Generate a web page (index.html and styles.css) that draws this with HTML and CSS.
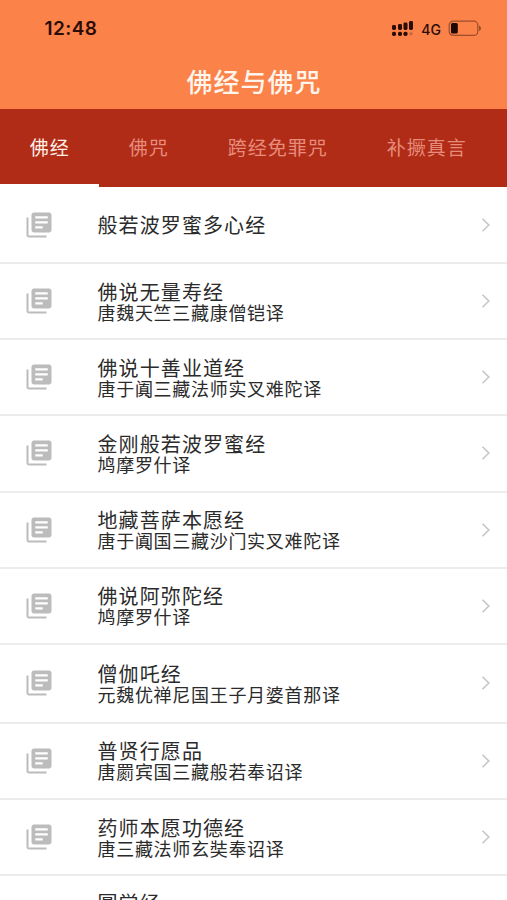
FILE: index.html
```html
<!DOCTYPE html>
<html lang="zh-CN">
<head>
<meta charset="utf-8">
<title>佛经与佛咒</title>
<link rel="stylesheet" href="styles.css">
</head>
<body>
<svg class="defs" width="0" height="0">
  <symbol id="book" viewBox="0 0 24 24"><path d="M3.600 6H2v14c0 1.100.9 2 2 2h14v-1.600H3.600V6zM20 2H8c-1.100 0-2 .9-2 2v12c0 1.100.9 2 2 2h12c1.100 0 2-.9 2-2V4c0-1.100-.9-2-2-2zm-1 8.700H9V9h10v1.700zm-4 4H9V13h6v1.700zm4-8H9V5h10v1.700z"/></symbol>
  <symbol id="chevron" viewBox="0 0 10 16"><path d="M1.500 1.800L7.800 8l-6.300 6.200" fill="none" stroke="#c6c6c8" stroke-width="1.600"/></symbol>
</svg>
<div class="screen">
  <header class="header">
    <div class="status">
      <span class="time">12:48</span>
      <div class="indicators">
        <svg class="signal" width="23" height="17" viewBox="0 0 23 17">
          <g fill="#2a0d08">
            <rect x="1" y="5" width="4" height="5" rx="1.4"/><rect x="7" y="4" width="4" height="6" rx="1.4"/><rect x="12.5" y="2.5" width="4" height="7.5" rx="1.4"/><rect x="18" y="1" width="4" height="9" rx="1.4"/>
            <rect x="1" y="11.7" width="4" height="4.2" rx="1.6"/><rect x="7" y="11.7" width="4" height="4.2" rx="1.6"/><rect x="12.5" y="11.7" width="4" height="4.2" rx="1.6"/>
            <rect x="18.5" y="12.2" width="3" height="3.2" rx="1.3" opacity=".25"/>
          </g>
        </svg>
        <span class="network">4G</span>
        <svg class="battery" width="34" height="17" viewBox="0 0 34 17">
          <rect x="1.2" y="1.2" width="28.6" height="14.2" rx="4" fill="none" stroke="#2a0d08" stroke-opacity=".45" stroke-width="1.2"/>
          <rect x="3" y="3" width="6.8" height="10.6" rx="1.5" fill="#1c0805"/>
          <path d="M31 5.500c1.300.6 2 1.600 2 2.800s-.7 2.200-2 2.800z" fill="#2a0d08" fill-opacity=".45"/>
        </svg>
      </div>
    </div>
    <h1 class="page-title">佛经与佛咒</h1>
  </header>
  <nav class="tabs">
    <span class="tab active">佛经</span>
    <span class="tab">佛咒</span>
    <span class="tab">跨经免罪咒</span>
    <span class="tab">补撅真言</span>
  </nav>
  <main class="list">
    <div class="row"><svg class="icon"><use href="#book"/></svg><div class="text"><div class="name">般若波罗蜜多心经</div></div><svg class="arrow"><use href="#chevron"/></svg></div>
    <div class="row"><svg class="icon"><use href="#book"/></svg><div class="text"><div class="name">佛说无量寿经</div><div class="by">唐魏天竺三藏康僧铠译</div></div><svg class="arrow"><use href="#chevron"/></svg></div>
    <div class="row"><svg class="icon"><use href="#book"/></svg><div class="text"><div class="name">佛说十善业道经</div><div class="by">唐于阗三藏法师实叉难陀译</div></div><svg class="arrow"><use href="#chevron"/></svg></div>
    <div class="row"><svg class="icon"><use href="#book"/></svg><div class="text"><div class="name">金刚般若波罗蜜经</div><div class="by">鸠摩罗什译</div></div><svg class="arrow"><use href="#chevron"/></svg></div>
    <div class="row"><svg class="icon"><use href="#book"/></svg><div class="text"><div class="name">地藏菩萨本愿经</div><div class="by">唐于阗国三藏沙门实叉难陀译</div></div><svg class="arrow"><use href="#chevron"/></svg></div>
    <div class="row"><svg class="icon"><use href="#book"/></svg><div class="text"><div class="name">佛说阿弥陀经</div><div class="by">鸠摩罗什译</div></div><svg class="arrow"><use href="#chevron"/></svg></div>
    <div class="row tall"><svg class="icon"><use href="#book"/></svg><div class="text"><div class="name">僧伽吒经</div><div class="by">元魏优禅尼国王子月婆首那译</div></div><svg class="arrow"><use href="#chevron"/></svg></div>
    <div class="row"><svg class="icon"><use href="#book"/></svg><div class="text"><div class="name">普贤行愿品</div><div class="by">唐罽宾国三藏般若奉诏译</div></div><svg class="arrow"><use href="#chevron"/></svg></div>
    <div class="row"><svg class="icon"><use href="#book"/></svg><div class="text"><div class="name">药师本愿功德经</div><div class="by">唐三藏法师玄奘奉诏译</div></div><svg class="arrow"><use href="#chevron"/></svg></div>
    <div class="row last"><div class="text"><div class="name">圆觉经</div></div></div>
  </main>
</div>
</body>
</html>
```
FILE: styles.css
```css
* { box-sizing: border-box; }
body {
  margin: 0;
  background: #fff;
  font-family: Inter, "Noto Sans CJK SC", sans-serif;
}
.defs { display: block; height: 0; }
.screen {
  width: 507px;
  height: 900px;
  overflow: hidden;
}
.header {
  height: 109px;
  background: #fb8249;
}
.status {
  display: flex;
  justify-content: space-between;
  align-items: center;
  height: 57px;
  padding: 0 25px 0 44.5px;
  color: #2a0d08;
}
.time {
  font-size: 19px;
  font-weight: 600;
  letter-spacing: 0.4px;
}
.indicators { display: flex; align-items: center; }
.network {
  margin: 2px 7px 0 7px;
  font-size: 14px;
  font-weight: 500;
}
.page-title {
  margin: 0;
  height: 52px;
  line-height: 52px;
  padding-left: 1px;
  text-align: center;
  font-size: 26px;
  font-weight: 500;
  letter-spacing: 1px;
  color: #fff5ec;
}
.tabs {
  display: flex;
  height: 78px;
  background: #b02c17;
}
.tab {
  padding: 0 29.2px 0 29.8px;
  line-height: 80px;
  font-size: 19px;
  letter-spacing: 1px;
  white-space: nowrap;
  color: #e78c7c;
}
.tab.active {
  color: #fff0e8;
  border-bottom: 3px solid #fff;
}
.row {
  display: flex;
  align-items: center;
  height: 76.2px;
  padding: 0 16px 0 23.5px;
  border-bottom: 2px solid #ececec;
}
.row:first-child { height: 77px; }
.row.tall { height: 78.8px; }
.icon {
  width: 30px;
  height: 30px;
  fill: #bcbcbc;
}
.text {
  flex: 1;
  margin-left: 44px;
  padding-top: 4px;
  color: #2b2b2b;
  white-space: nowrap;
}
.name {
  font-size: 20px;
  line-height: 21px;
  letter-spacing: 1.1px;
}
.by {
  font-size: 18px;
  line-height: 20px;
  letter-spacing: 0.7px;
}
.arrow {
  width: 10px;
  height: 16px;
}
.row.last {
  align-items: flex-start;
  padding: 14px 16px 0 53.5px;
  border-bottom: 0;
}
```
